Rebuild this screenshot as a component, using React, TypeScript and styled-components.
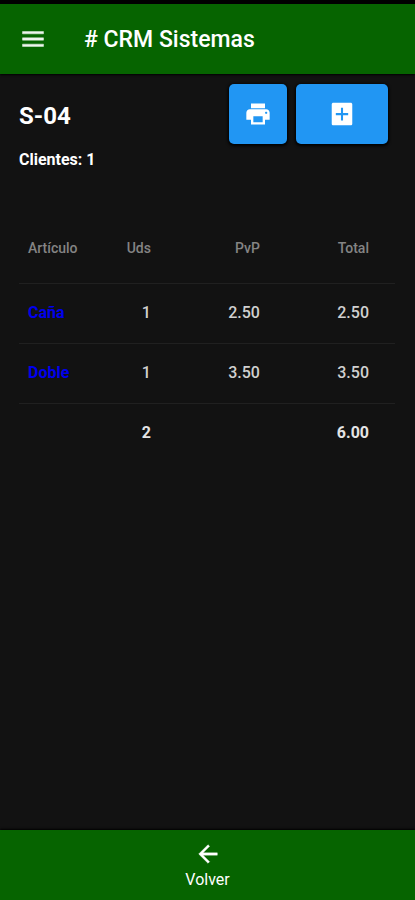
import React from "react";
import styled, { createGlobalStyle } from "styled-components";

const GlobalStyle = createGlobalStyle`
  *, *::before, *::after { box-sizing: border-box; }
  body {
    margin: 0;
    background: #121212;
    color: #fff;
    font-family: Roboto, "Liberation Sans", sans-serif;
  }
`;

const Screen = styled.div`
  min-height: 100vh;
  display: flex;
  flex-direction: column;
  border-top: 4px solid #000;
`;

const AppBar = styled.header`
  display: flex;
  align-items: center;
  gap: 37px;
  height: 70px;
  padding: 0 19px;
  background: #066400;
  box-shadow: 0 1px 2px #000;
`;

const MenuButton = styled.button`
  display: flex;
  padding: 0;
  border: 0;
  background: none;
  color: #eef5ee;
  cursor: pointer;
`;

const AppTitle = styled.h1`
  margin: 0;
  font-size: 23px;
  line-height: 33px;
  font-weight: 500;
  white-space: nowrap;
`;

const Main = styled.main`
  flex: 1;
  padding: 10px 20px 0 19px;
`;

const Summary = styled.section`
  display: flex;
  justify-content: space-between;
  align-items: flex-start;
  padding-right: 7px;
`;

const TableName = styled.h2`
  margin: 16px 0 0;
  font-size: 24px;
  line-height: 32px;
  font-weight: 700;
`;

const Guests = styled.p`
  margin: 16px 0 0;
  font-size: 16px;
  line-height: 24px;
  font-weight: 700;
`;

const Actions = styled.div`
  display: flex;
  gap: 9px;
`;

const ActionButton = styled.button<{ $width: number }>`
  display: flex;
  align-items: center;
  justify-content: center;
  width: ${({ $width }) => $width}px;
  height: 60px;
  padding: 0;
  border: 0;
  border-radius: 5px;
  background: #2196f3;
  color: #fff;
  box-shadow: 0 1px 3px 1px #000;
  cursor: pointer;
`;

const OrderTable = styled.table`
  width: 100%;
  margin-top: 42px;
  border-collapse: collapse;
  table-layout: fixed;
`;

const Col = styled.col<{ $share: number }>`
  width: ${({ $share }) => $share}%;
`;

const Row = styled.tr`
  height: 60px;
  border-top: 1px solid #202020;
`;

const HeadRow = styled.tr`
  height: 69px;
`;

const HeadCell = styled.th<{ $start?: boolean }>`
  padding: 0 26px 0 9px;
  font-size: 14px;
  line-height: 20px;
  font-weight: 500;
  color: #848484;
  text-align: ${({ $start }) => ($start ? "left" : "right")};
  white-space: nowrap;
`;

const Cell = styled.td<{ $start?: boolean; $strong?: boolean }>`
  padding: 0 26px 0 9px;
  font-size: 16px;
  line-height: 24px;
  font-weight: ${({ $strong }) => ($strong ? 700 : 500)};
  color: ${({ $strong }) => ($strong ? "#e4e4e4" : "#d0d0d0")};
  text-align: ${({ $start }) => ($start ? "left" : "right")};
  white-space: nowrap;
`;

const ArticleLink = styled.a`
  color: #0000ee;
  font-weight: 700;
  text-decoration: none;
`;

const BottomBar = styled.nav`
  display: flex;
  justify-content: center;
  height: 70px;
  background: #066400;
  box-shadow: 0 -1px 2px #000;
`;

const BackButton = styled.button`
  display: flex;
  flex-direction: column;
  align-items: center;
  padding: 10px 16px 8px;
  border: 0;
  background: none;
  color: #fff;
  font-family: inherit;
  font-size: 16px;
  line-height: 24px;
  cursor: pointer;
`;

const Icon = ({ d, size, weight = 0 }: { d: string; size: number; weight?: number }) => (
  <svg
    width={size}
    height={size}
    viewBox="0 0 24 24"
    fill="currentColor"
    stroke="currentColor"
    strokeWidth={weight}
    aria-hidden="true"
  >
    <path d={d} />
  </svg>
);

const icons = {
  menu: "M3 18.400h18v-2H3v2zm0-5.400h18v-2H3v2zm0-7.400v2h18v-2H3z",
  print:
    "M19 8H5c-1.660 0-3 1.340-3 3v6h4v4h12v-4h4v-6c0-1.660-1.340-3-3-3zm-3 11H8v-5h8v5zm3-7c-.55 0-1-.45-1-1s.45-1 1-1 1 .45 1 1-.45 1-1 1zm-1-9H6v4h12V3z",
  addBox:
    "M19.400 2.300H4.600c-.8 0-1.400.6-1.400 1.400v16.600c0 .8.6 1.400 1.400 1.400h14.800c.8 0 1.400-.6 1.400-1.400V3.700c0-.8-.6-1.400-1.400-1.400zM17.300 13h-4.400v4.600h-1.800V13H6.700v-1.800h4.400V6.600h1.800v4.600h4.400V13z",
  back: "M20 11H7.830l5.590-5.590L12 4l-8 8 8 8 1.410-1.410L7.830 13H20v-2z",
};

const lines = [
  { name: "Caña", units: 1, price: 2.5 },
  { name: "Doble", units: 1, price: 3.5 },
];

const totalUnits = lines.reduce((sum, line) => sum + line.units, 0);
const totalPrice = lines.reduce((sum, line) => sum + line.units * line.price, 0);

export default function App() {
  return (
    <>
      <GlobalStyle />
      <Screen>
        <AppBar>
          <MenuButton type="button" aria-label="Menú">
            <Icon d={icons.menu} size={28} weight={0.4} />
          </MenuButton>
          <AppTitle># CRM Sistemas</AppTitle>
        </AppBar>
        <Main>
          <Summary>
            <div>
              <TableName>S-04</TableName>
              <Guests>Clientes: 1</Guests>
            </div>
            <Actions>
              <ActionButton type="button" $width={58} aria-label="Imprimir">
                <Icon d={icons.print} size={28} />
              </ActionButton>
              <ActionButton type="button" $width={92} aria-label="Añadir">
                <Icon d={icons.addBox} size={28} />
              </ActionButton>
            </Actions>
          </Summary>
          <OrderTable>
            <colgroup>
              <Col $share={24} />
              <Col $share={18} />
              <Col $share={29} />
              <Col $share={29} />
            </colgroup>
            <thead>
              <HeadRow>
                <HeadCell scope="col" $start>Artículo</HeadCell>
                <HeadCell scope="col">Uds</HeadCell>
                <HeadCell scope="col">PvP</HeadCell>
                <HeadCell scope="col">Total</HeadCell>
              </HeadRow>
            </thead>
            <tbody>
              {lines.map((line) => (
                <Row key={line.name}>
                  <Cell $start>
                    <ArticleLink href="#">{line.name}</ArticleLink>
                  </Cell>
                  <Cell>{line.units}</Cell>
                  <Cell>{line.price.toFixed(2)}</Cell>
                  <Cell>{(line.units * line.price).toFixed(2)}</Cell>
                </Row>
              ))}
            </tbody>
            <tfoot>
              <Row>
                <Cell />
                <Cell $strong>{totalUnits}</Cell>
                <Cell />
                <Cell $strong>{totalPrice.toFixed(2)}</Cell>
              </Row>
            </tfoot>
          </OrderTable>
        </Main>
        <BottomBar>
          <BackButton type="button">
            <Icon d={icons.back} size={28} weight={0.3} />
            Volver
          </BackButton>
        </BottomBar>
      </Screen>
    </>
  );
}
